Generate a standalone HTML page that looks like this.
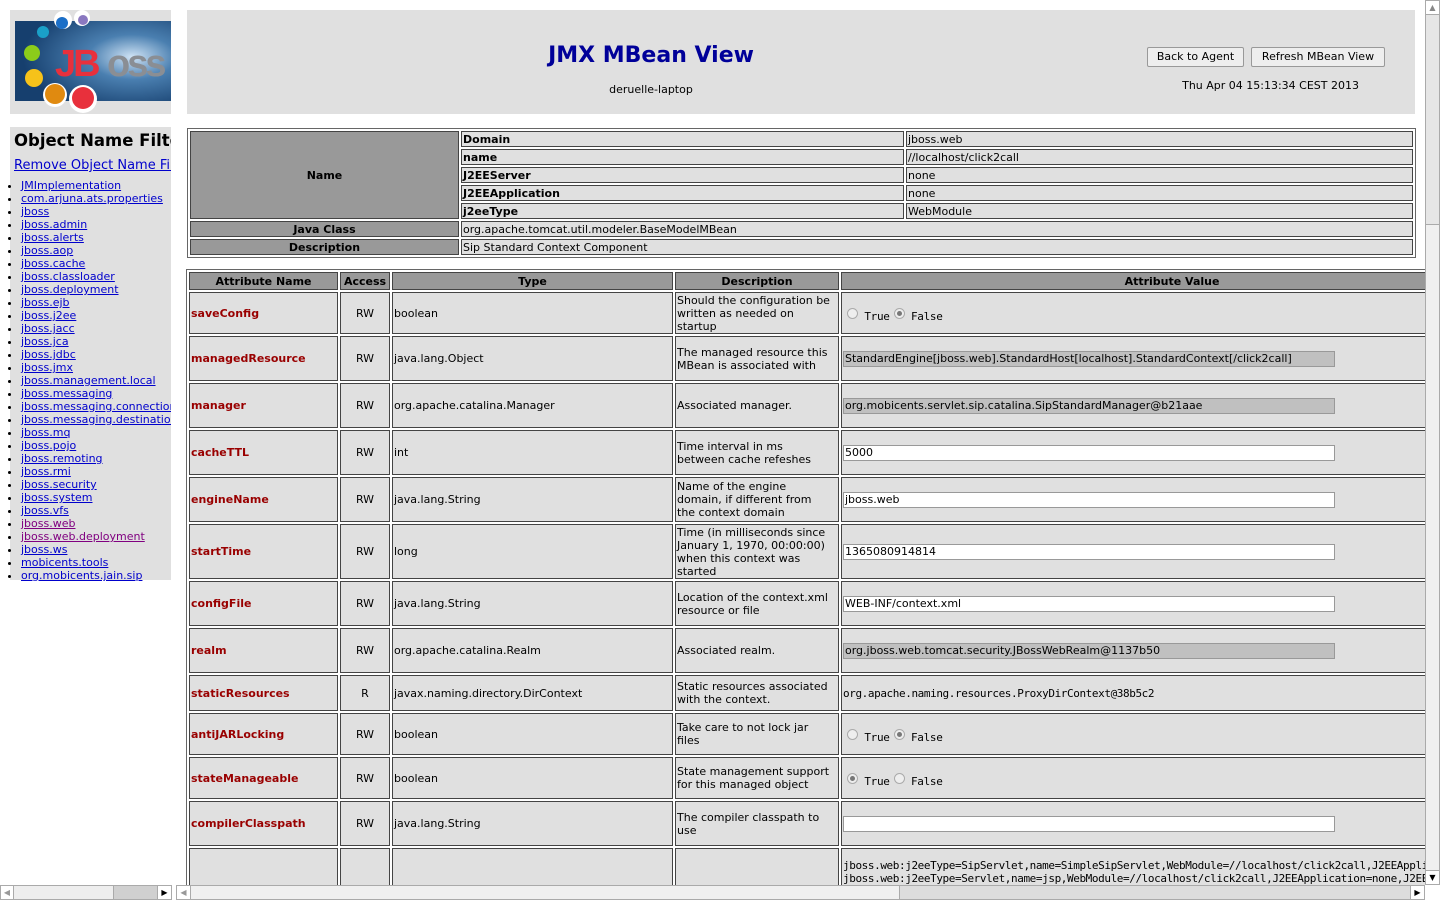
<!DOCTYPE html>
<html><head><meta charset="utf-8">
<style>
*{margin:0;padding:0;box-sizing:border-box}
body{width:1440px;height:900px;background:#fff;position:relative;overflow:hidden;font-family:"DejaVu Sans","Liberation Sans",sans-serif;font-size:11px;color:#000}
.abs{position:absolute}
#lf{position:absolute;left:0;top:0;width:171px;height:885px;overflow:hidden}
#rf{position:absolute;left:176px;top:0;width:1249px;height:885px;overflow:hidden}
a{color:#0000cc;text-decoration:underline}
a.v{color:#800080}
ul{list-style:disc;margin-left:21px}
li{height:13px;line-height:13px;font-size:11px;white-space:nowrap}
table{border-collapse:separate;border-spacing:2px;table-layout:fixed;position:absolute}
td,th{border:1px solid #444;background:#e0e0e0;font-size:11px;line-height:13px;padding:0 1px;overflow:hidden;white-space:nowrap}
th{background:#999;font-weight:bold}
.t1 td.k{font-weight:bold;text-align:left}
.nm{color:#990000;font-weight:bold}
.ds{white-space:normal;padding-right:4px}
.ro{display:inline-block;width:492px;height:16px;border:1px solid #999;background:#c0c0c0;line-height:14px;padding-left:1px;vertical-align:middle}
.in{display:inline-block;width:492px;height:16px;border:1px solid #999;background:#fff;line-height:14px;padding-left:1px;vertical-align:middle}
.rad{display:inline-block;width:11px;height:11px;border:1px solid #aaa;border-radius:50%;background:#eee;vertical-align:1px;margin-left:4px;position:relative}
.rad.on:after{content:"";position:absolute;left:2px;top:2px;width:5px;height:5px;border-radius:50%;background:#777}
.rv{font-family:"DejaVu Sans Mono","Liberation Mono",monospace;font-size:11px;letter-spacing:-0.3px;padding-top:4px}
.mono{font-family:"DejaVu Sans Mono","Liberation Mono",monospace;font-size:11px;letter-spacing:-0.4px}
.sb{position:absolute;background:#eee;border:1px solid #aaa}
</style></head><body>

<div id="lf">
 <div class="abs" style="left:10px;top:10px;width:161px;height:104px;background:#e0e0e0"></div>
 <svg class="abs" style="left:15px;top:10px" width="156" height="104">
  <defs><radialGradient id="g" cx="0.75" cy="0.45" r="0.7"><stop offset="0" stop-color="#cfe3f5"/><stop offset="0.4" stop-color="#4a7fb0"/><stop offset="1" stop-color="#163f6e"/></radialGradient></defs>
  <rect x="0" y="11" width="156" height="80" fill="url(#g)"/>
  <circle cx="48" cy="10" r="9" fill="#fff"/><circle cx="67" cy="8" r="8" fill="#fff"/>
  <circle cx="47" cy="13" r="6" fill="#1b6fc8"/><circle cx="68" cy="10" r="5" fill="#8a78c0"/>
  <circle cx="28" cy="22" r="6" fill="#1aa0c8"/>
  <circle cx="17" cy="43" r="8" fill="#8ccc1a"/>
  <circle cx="19" cy="68" r="9" fill="#f6c21a"/>
  <circle cx="40" cy="85" r="12" fill="#fff"/><circle cx="40" cy="84" r="10" fill="#e08a10"/>
  <circle cx="68" cy="89" r="14" fill="#fff"/><circle cx="68" cy="88" r="11" fill="#e8303c"/>
  <text x="40" y="66" font-family="Liberation Sans" font-weight="bold" font-size="38" fill="#e8303c" letter-spacing="-3">JB</text>
  <text x="92" y="66" font-family="Liberation Sans" font-weight="bold" font-size="38" fill="#8a8e94" letter-spacing="-3">oss</text>
 </svg>
 <div class="abs" style="left:10px;top:127px;width:161px;height:453px;background:#e0e0e0">
  <div style="position:absolute;left:4px;top:4px;font-size:16.5px;font-weight:bold;white-space:nowrap">Object Name Filter</div>
  <div style="position:absolute;left:4px;top:31px;font-size:13px;white-space:nowrap"><a href="#">Remove Object Name Filter</a></div>
  <ul style="position:absolute;left:-10px;top:52px;width:200px">
   <li><a href="#">JMImplementation</a></li><li><a href="#">com.arjuna.ats.properties</a></li><li><a href="#">jboss</a></li><li><a href="#">jboss.admin</a></li><li><a href="#">jboss.alerts</a></li><li><a href="#">jboss.aop</a></li><li><a href="#">jboss.cache</a></li><li><a href="#">jboss.classloader</a></li><li><a href="#">jboss.deployment</a></li><li><a href="#">jboss.ejb</a></li><li><a href="#">jboss.j2ee</a></li><li><a href="#">jboss.jacc</a></li><li><a href="#">jboss.jca</a></li><li><a href="#">jboss.jdbc</a></li><li><a href="#">jboss.jmx</a></li><li><a href="#">jboss.management.local</a></li><li><a href="#">jboss.messaging</a></li><li><a href="#">jboss.messaging.connectionfactory</a></li><li><a href="#">jboss.messaging.destination</a></li><li><a href="#">jboss.mq</a></li><li><a href="#">jboss.pojo</a></li><li><a href="#">jboss.remoting</a></li><li><a href="#">jboss.rmi</a></li><li><a href="#">jboss.security</a></li><li><a href="#">jboss.system</a></li><li><a href="#">jboss.vfs</a></li><li><a class="v" href="#">jboss.web</a></li><li><a class="v" href="#">jboss.web.deployment</a></li><li><a href="#">jboss.ws</a></li><li><a href="#">mobicents.tools</a></li><li><a href="#">org.mobicents.jain.sip</a></li>
  </ul>
 </div>
</div>

<div id="rf">
 <div class="abs" style="left:11px;top:10px;width:1228px;height:104px;background:#e0e0e0">
  <div class="abs" style="left:0;width:928px;top:33px;text-align:center;font-size:22px;font-weight:bold;color:#000099">JMX MBean View</div>
  <div class="abs" style="left:0;width:928px;top:73px;text-align:center;font-size:11px">deruelle-laptop</div>
  <div class="abs" style="left:960px;top:37px;width:97px;height:20px;border:1px solid #999;background:#eee;border-radius:2px;text-align:center;line-height:18px">Back to Agent</div>
  <div class="abs" style="left:1064px;top:37px;width:134px;height:20px;border:1px solid #999;background:#eee;border-radius:2px;text-align:center;line-height:18px">Refresh MBean View</div>
  <div class="abs" style="left:900px;width:272px;top:69px;text-align:right;font-size:11px">Thu Apr 04 15:13:34 CEST 2013</div>
 </div>

 <table class="t1" style="left:11px;top:128px;width:1229px;border:1px solid #666">
  <col style="width:269px"><col style="width:443px"><col>
  <tr style="height:16px"><th rowspan="5" style="height:88px">Name</th><td class="k" style="height:16px">Domain</td><td>jboss.web</td></tr>
  <tr><td class="k" style="height:16px">name</td><td>//localhost/click2call</td></tr>
  <tr><td class="k" style="height:16px">J2EEServer</td><td>none</td></tr>
  <tr><td class="k" style="height:16px">J2EEApplication</td><td>none</td></tr>
  <tr><td class="k" style="height:16px">j2eeType</td><td>WebModule</td></tr>
  <tr><th style="height:16px">Java Class</th><td colspan="2">org.apache.tomcat.util.modeler.BaseModelMBean</td></tr>
  <tr><th style="height:16px">Description</th><td colspan="2">Sip Standard Context Component</td></tr>
 </table>

 <table style="left:10px;top:269px;width:1320px;border:1px solid #666">
  <col style="width:149px"><col style="width:50px"><col style="width:281px"><col style="width:164px"><col>
  <tr><th style="height:18px">Attribute Name</th><th>Access</th><th>Type</th><th>Description</th><th>Attribute Value</th></tr>
  <tr><td class="nm" style="height:42px">saveConfig</td><td align="center">RW</td><td>boolean</td><td class="ds">Should the configuration be written as needed on startup</td><td class="rv"><span class="rad"></span> True<span class="rad on"></span> False</td></tr>
  <tr><td class="nm" style="height:45px">managedResource</td><td align="center">RW</td><td>java.lang.Object</td><td class="ds">The managed resource this MBean is associated with</td><td><span class="ro">StandardEngine[jboss.web].StandardHost[localhost].StandardContext[/click2call]</span></td></tr>
  <tr><td class="nm" style="height:45px">manager</td><td align="center">RW</td><td>org.apache.catalina.Manager</td><td class="ds">Associated manager.</td><td><span class="ro">org.mobicents.servlet.sip.catalina.SipStandardManager@b21aae</span></td></tr>
  <tr><td class="nm" style="height:45px">cacheTTL</td><td align="center">RW</td><td>int</td><td class="ds">Time interval in ms<br>between cache refeshes</td><td><span class="in">5000</span></td></tr>
  <tr><td class="nm" style="height:45px">engineName</td><td align="center">RW</td><td>java.lang.String</td><td class="ds">Name of the engine<br>domain, if different from<br>the context domain</td><td><span class="in">jboss.web</span></td></tr>
  <tr><td class="nm" style="height:55px">startTime</td><td align="center">RW</td><td>long</td><td class="ds">Time (in milliseconds since January 1, 1970, 00:00:00) when this context was started</td><td><span class="in">1365080914814</span></td></tr>
  <tr><td class="nm" style="height:45px">configFile</td><td align="center">RW</td><td>java.lang.String</td><td class="ds">Location of the context.xml resource or file</td><td><span class="in">WEB-INF/context.xml</span></td></tr>
  <tr><td class="nm" style="height:45px">realm</td><td align="center">RW</td><td>org.apache.catalina.Realm</td><td class="ds">Associated realm.</td><td><span class="ro">org.jboss.web.tomcat.security.JBossWebRealm@1137b50</span></td></tr>
  <tr><td class="nm" style="height:36px">staticResources</td><td align="center">R</td><td>javax.naming.directory.DirContext</td><td class="ds">Static resources associated with the context.</td><td class="mono">org.apache.naming.resources.ProxyDirContext@38b5c2</td></tr>
  <tr><td class="nm" style="height:42px">antiJARLocking</td><td align="center">RW</td><td>boolean</td><td class="ds">Take care to not lock jar<br>files</td><td class="rv"><span class="rad"></span> True<span class="rad on"></span> False</td></tr>
  <tr><td class="nm" style="height:42px">stateManageable</td><td align="center">RW</td><td>boolean</td><td class="ds">State management support for this managed object</td><td class="rv"><span class="rad on"></span> True<span class="rad"></span> False</td></tr>
  <tr><td class="nm" style="height:45px">compilerClasspath</td><td align="center">RW</td><td>java.lang.String</td><td class="ds">The compiler classpath to use</td><td><span class="in"></span></td></tr>
  <tr><td style="height:60px;vertical-align:top"></td><td></td><td></td><td></td><td class="mono" style="vertical-align:top;padding-top:10px">jboss.web:j2eeType=SipServlet,name=SimpleSipServlet,WebModule=//localhost/click2call,J2EEApplication=none<br>jboss.web:j2eeType=Servlet,name=jsp,WebModule=//localhost/click2call,J2EEApplication=none,J2EEServer=none</td></tr>
 </table>
</div>

<div class="sb" style="left:1425px;top:0;width:15px;height:885px;background:#f0f0f0"></div>
<div class="sb" style="left:1425px;top:0;width:15px;height:15px;background:#fff;font-size:8px;text-align:center;line-height:13px;color:#888">▲</div>
<div class="sb" style="left:1425px;top:14px;width:15px;height:211px;background:#e6e6e6"></div>
<div class="sb" style="left:1425px;top:870px;width:15px;height:15px;background:#fff;font-size:8px;text-align:center;line-height:13px;color:#000">▼</div>
<div class="sb" style="left:0;top:885px;width:172px;height:15px;background:#eee"></div>
<div class="sb" style="left:113px;top:885px;width:45px;height:15px;background:#d0d0d0"></div>
<div class="sb" style="left:157px;top:885px;width:15px;height:15px;background:#fff;font-size:8px;text-align:center;line-height:13px">▶</div>
<div class="sb" style="left:0;top:885px;width:14px;height:15px;background:#fff;font-size:8px;text-align:center;line-height:13px;color:#999">◀</div>
<div class="sb" style="left:176px;top:885px;width:1249px;height:15px;background:#ddd"></div>
<div class="sb" style="left:190px;top:885px;width:710px;height:15px;background:#f0f0f0"></div>
<div class="sb" style="left:176px;top:885px;width:15px;height:15px;background:#fff;font-size:8px;text-align:center;line-height:13px;color:#999">◀</div>
<div class="sb" style="left:1410px;top:885px;width:15px;height:15px;background:#fff;font-size:8px;text-align:center;line-height:13px">▶</div>
</body></html>
